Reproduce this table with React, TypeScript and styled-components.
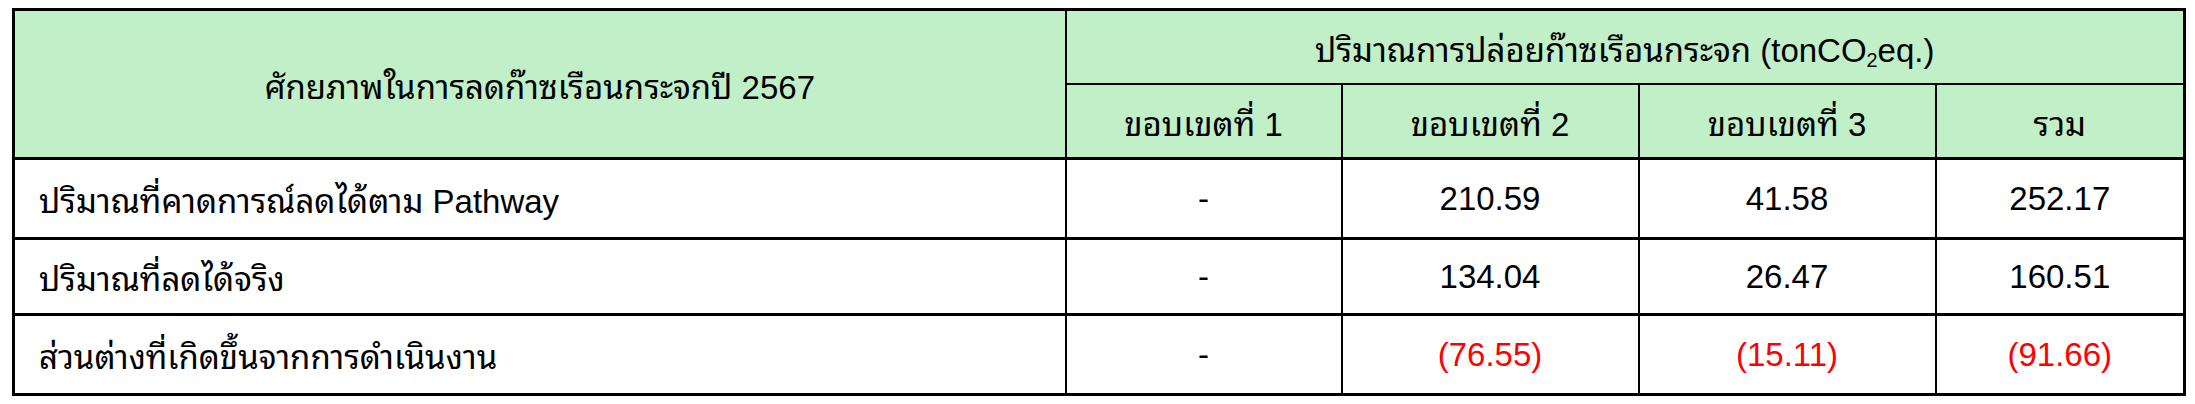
import styled, { createGlobalStyle } from 'styled-components';

const GlobalStyle = createGlobalStyle`
  html, body {
    margin: 0;
    padding: 0;
    background: #ffffff;
  }
  body {
    font-family: "Liberation Sans", "Noto Sans Thai Looped", "Noto Sans Thai", "Noto Sans", sans-serif;
  }
`;

const Page = styled.div`
  padding: 8px 12px 0 12px;
`;

const Table = styled.table`
  width: 2171px;
  border-collapse: collapse;
  table-layout: fixed;
  border: 3px solid #000;
  font-size: 33px;
  color: #000;
`;

const HeadCell = styled.th`
  background: #c1efc8;
  border: 2px solid #000;
  font-weight: normal;
  text-align: center;
  vertical-align: middle;
  height: 72px;
  padding: 0;
`;

const Sub = styled.sub`
  font-size: 0.6em;
  vertical-align: -0.25em;
`;

const Cell = styled.td<{ $align?: 'left' | 'center'; $neg?: boolean }>`
  border: 2px solid #000;
  border-top-width: 3px;
  text-align: ${(p) => p.$align ?? 'center'};
  padding: ${(p) => (p.$align === 'left' ? '0 0 0 24px' : '0')};
  color: ${(p) => (p.$neg ? '#ff0000' : '#000')};
  vertical-align: middle;
`;

const Row = styled.tr<{ $h: number }>`
  height: ${(p) => p.$h}px;
`;

const rows = [
  { label: 'ปริมาณที่คาดการณ์ลดได้ตาม Pathway', values: ['-', '210.59', '41.58', '252.17'], h: 80, neg: false },
  { label: 'ปริมาณที่ลดได้จริง', values: ['-', '134.04', '26.47', '160.51'], h: 76, neg: false },
  { label: 'ส่วนต่างที่เกิดขึ้นจากการดำเนินงาน', values: ['-', '(76.55)', '(15.11)', '(91.66)'], h: 80, neg: true },
];

export default function App() {
  return (
    <Page>
      <GlobalStyle />
      <Table>
        <colgroup>
          <col style={{ width: 1052 }} />
          <col style={{ width: 276 }} />
          <col style={{ width: 297 }} />
          <col style={{ width: 297 }} />
          <col style={{ width: 249 }} />
        </colgroup>
        <thead>
          <tr>
            <HeadCell rowSpan={2}>ศักยภาพในการลดก๊าซเรือนกระจกปี 2567</HeadCell>
            <HeadCell colSpan={4}>
              ปริมาณการปล่อยก๊าซเรือนกระจก (tonCO<Sub>2</Sub>eq.)
            </HeadCell>
          </tr>
          <tr>
            <HeadCell>ขอบเขตที่ 1</HeadCell>
            <HeadCell>ขอบเขตที่ 2</HeadCell>
            <HeadCell>ขอบเขตที่ 3</HeadCell>
            <HeadCell>รวม</HeadCell>
          </tr>
        </thead>
        <tbody>
          {rows.map((r) => (
            <Row key={r.label} $h={r.h}>
              <Cell $align="left">{r.label}</Cell>
              {r.values.map((v, i) => (
                <Cell key={i} $neg={r.neg && v !== '-'}>
                  {v}
                </Cell>
              ))}
            </Row>
          ))}
        </tbody>
      </Table>
    </Page>
  );
}
